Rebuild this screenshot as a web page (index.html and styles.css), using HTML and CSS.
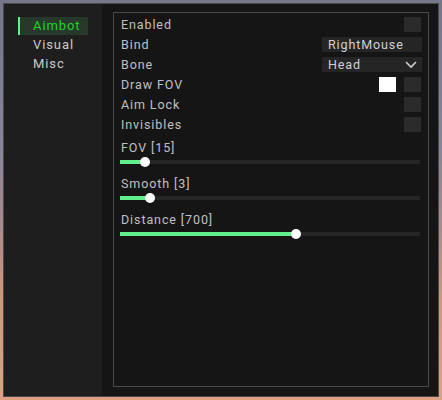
FILE: index.html
```html
<!DOCTYPE html>
<html lang="en">

<head>
    <meta charset="UTF-8">
    <meta name="viewport" content="width=device-width, initial-scale=1.0">
    <title>Menu</title>
    <link rel="stylesheet" href="styles.css">
</head>

<body>
    <div class="window">
        <div class="sidebar">
            <div class="tab active">Aimbot</div>
            <div class="tab">Visual</div>
            <div class="tab">Misc</div>
        </div>
        <div class="main">
            <div class="panel">
                <div class="row">
                    <span class="label">Enabled</span>
                    <span class="check"></span>
                </div>
                <div class="row">
                    <span class="label">Bind</span>
                    <span class="field">RightMouse</span>
                </div>
                <div class="row">
                    <span class="label">Bone</span>
                    <span class="field select">Head
                        <svg width="12" height="8" viewBox="0 0 12 8"><polyline points="1,1 6,6 11,1" fill="none" stroke="#cfcfcf" stroke-width="1.6"/></svg>
                    </span>
                </div>
                <div class="row">
                    <span class="label">Draw FOV</span>
                    <span class="swatch"></span>
                    <span class="check"></span>
                </div>
                <div class="row">
                    <span class="label">Aim Lock</span>
                    <span class="check"></span>
                </div>
                <div class="row">
                    <span class="label">Invisibles</span>
                    <span class="check"></span>
                </div>

                <div class="slider first">
                    <div class="label">FOV [15]</div>
                    <div class="track"><div class="fill" style="width: 25px"></div><span class="knob" style="left: 25px"></span></div>
                </div>
                <div class="slider">
                    <div class="label">Smooth [3]</div>
                    <div class="track"><div class="fill" style="width: 30px"></div><span class="knob" style="left: 30px"></span></div>
                </div>
                <div class="slider">
                    <div class="label">Distance [700]</div>
                    <div class="track"><div class="fill" style="width: 176px"></div><span class="knob" style="left: 176px"></span></div>
                </div>
            </div>
        </div>
    </div>
</body>

</html>
```

FILE: styles.css
```css
* {
    padding: 0;
    margin: 0;
    box-sizing: border-box;
}

body {
    width: 442px;
    height: 400px;
    overflow: hidden;
    background: linear-gradient(to bottom, #75768a 0%, #85849a 35%, #a58a8e 55%, #cf977c 75%, #dca283 100%);
    font-family: Roboto, "Liberation Sans", sans-serif;
    font-size: 12.5px;
    letter-spacing: 0.9px;
}

.window {
    margin: 3px 0 0 3px;
    width: 436px;
    height: 394px;
    border: 1px solid #4a4a4a;
    background-color: #151515;
    display: flex;
}

.sidebar {
    width: 98px;
    background-color: #1e1e1e;
    padding: 13px 0 0 14px;
    display: flex;
    flex-direction: column;
    gap: 1px;
}

.tab {
    width: 70px;
    height: 18px;
    line-height: 18px;
    padding-left: 15px;
    color: #cacaca;
    font-size: 13px;
}

.tab.active {
    background-color: #26392b;
    border-left: 2px solid #62f08c;
    padding-left: 13px;
    color: #1ed41e;
}

.main {
    flex: 1;
    padding: 8px 9px 9px 11px;
}

.panel {
    height: 100%;
    border: 1px solid #4a4a4a;
    padding: 4px 7px 0 7px;
}

.row {
    height: 20px;
    display: flex;
    align-items: flex-start;
    gap: 8px;
}

.row .label {
    flex: 1;
    line-height: 15px;
    color: #c0c0c0;
}

.check {
    width: 17px;
    height: 15px;
    background-color: #2b2b2b;
}

.swatch {
    width: 17px;
    height: 15px;
    background-color: #ffffff;
}

.field {
    width: 100px;
    height: 15px;
    line-height: 15px;
    background-color: #252525;
    color: #d2d2d2;
    padding-left: 6px;
    margin-right: -1px;
}

.select {
    display: flex;
    justify-content: space-between;
    align-items: center;
    padding-right: 5px;
}

.slider {
    margin-top: 12px;
}

.slider.first {
    margin-top: 3px;
}

.slider .label {
    line-height: 16px;
    color: #c0c0c0;
}

.track {
    position: relative;
    width: 300px;
    height: 4px;
    margin: 4px 0 3px -1px;
    background-color: #262626;
}

.fill {
    height: 100%;
    background-color: #62f08c;
}

.knob {
    position: absolute;
    top: -3px;
    width: 10px;
    height: 10px;
    margin-left: -5px;
    border-radius: 50%;
    background-color: #ffffff;
}
```
